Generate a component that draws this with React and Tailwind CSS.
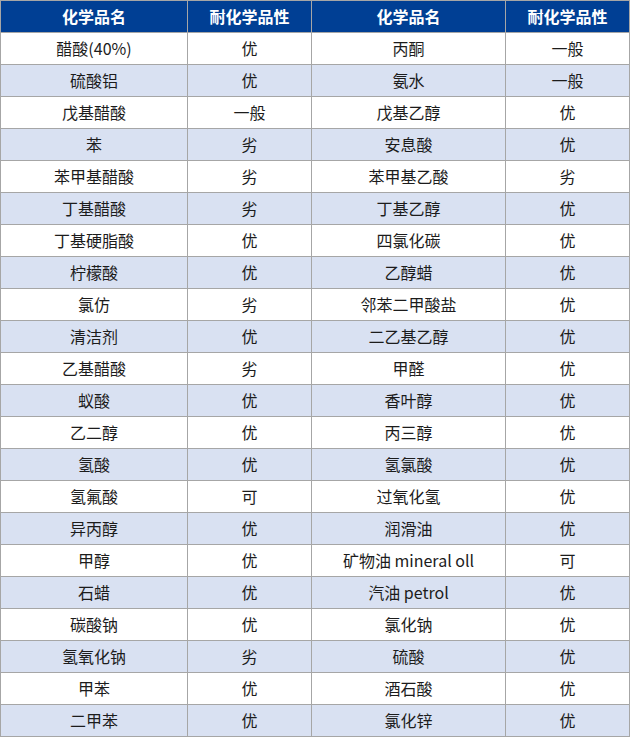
const rows = [
  ["醋酸(40%)", "优", "丙酮", "一般"],
  ["硫酸铝", "优", "氨水", "一般"],
  ["戊基醋酸", "一般", "戊基乙醇", "优"],
  ["苯", "劣", "安息酸", "优"],
  ["苯甲基醋酸", "劣", "苯甲基乙酸", "劣"],
  ["丁基醋酸", "劣", "丁基乙醇", "优"],
  ["丁基硬脂酸", "优", "四氯化碳", "优"],
  ["柠檬酸", "优", "乙醇蜡", "优"],
  ["氯仿", "劣", "邻苯二甲酸盐", "优"],
  ["清洁剂", "优", "二乙基乙醇", "优"],
  ["乙基醋酸", "劣", "甲醛", "优"],
  ["蚁酸", "优", "香叶醇", "优"],
  ["乙二醇", "优", "丙三醇", "优"],
  ["氢酸", "优", "氢氯酸", "优"],
  ["氢氟酸", "可", "过氧化氢", "优"],
  ["异丙醇", "优", "润滑油", "优"],
  ["甲醇", "优", "矿物油 mineral oll", "可"],
  ["石蜡", "优", "汽油 petrol", "优"],
  ["碳酸钠", "优", "氯化钠", "优"],
  ["氢氧化钠", "劣", "硫酸", "优"],
  ["甲苯", "优", "酒石酸", "优"],
  ["二甲苯", "优", "氯化锌", "优"],
];

const headers = ["化学品名", "耐化学品性", "化学品名", "耐化学品性"];

export default function App() {
  return (
    <div className="w-[630px] bg-white font-['Noto_Sans_CJK_SC','Noto_Sans',sans-serif] text-[16px] leading-none text-[#1c1c1c]">
      <div className="grid grid-cols-[187px_124px_194px_124px] border-l border-t border-[#a6a6a6]">
        {headers.map((h, i) => (
          <div
            key={i}
            className="h-[32px] pb-[2px] flex items-center justify-center bg-[#003f94] text-white font-bold border-r border-b border-[#a6a6a6]"
          >
            {h}
          </div>
        ))}
        {rows.map((r, ri) =>
          r.map((c, ci) => (
            <div
              key={ri + "-" + ci}
              className={
                "h-[32px] pb-[2px] flex items-center justify-center border-r border-b border-[#a6a6a6] " +
                (ri % 2 === 1 ? "bg-[#d9e1f2]" : "bg-white")
              }
            >
              {c}
            </div>
          ))
        )}
      </div>
    </div>
  );
}
